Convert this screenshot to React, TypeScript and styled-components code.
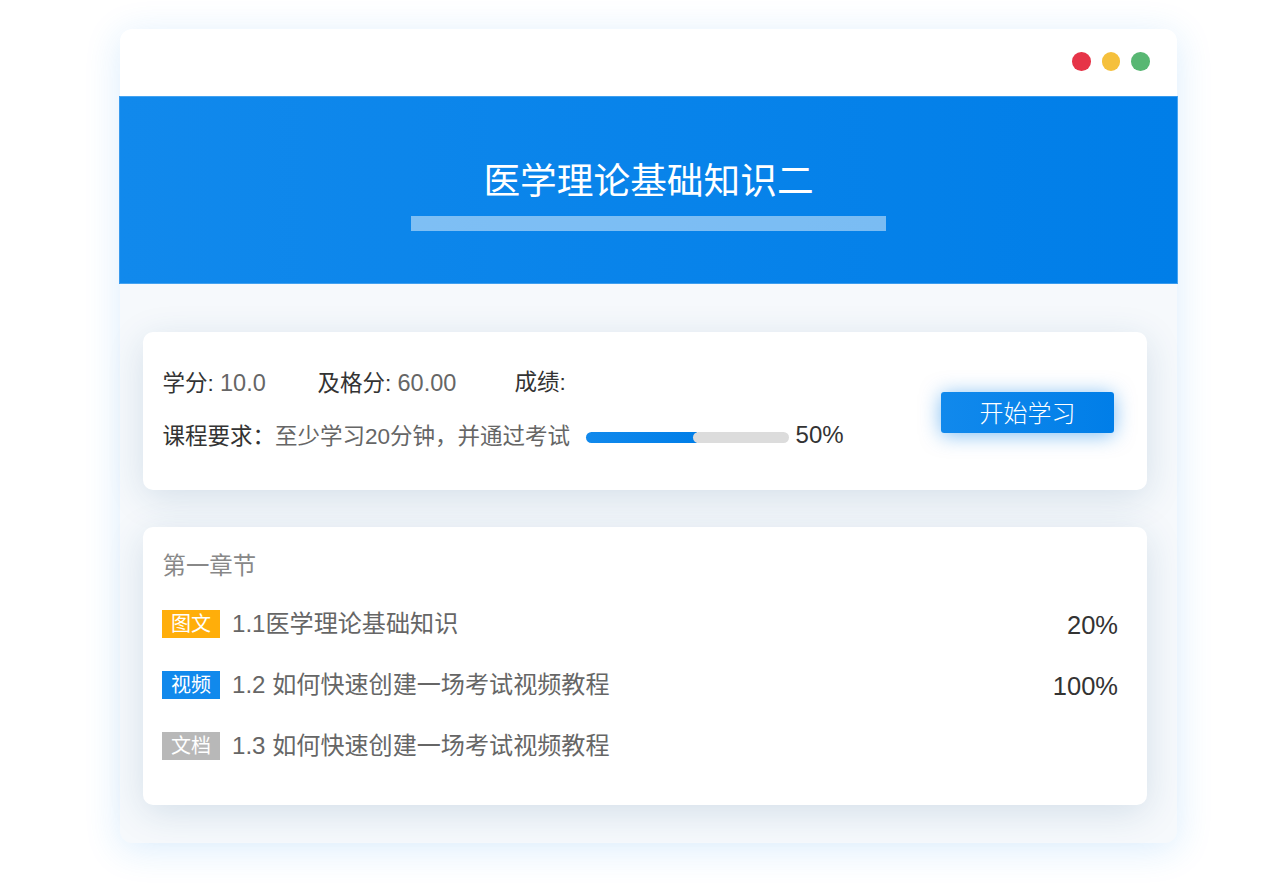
import styled, { createGlobalStyle } from 'styled-components';

const GlobalStyle = createGlobalStyle`
  html, body {
    margin: 0;
    padding: 0;
    background: #fff;
    font-family: "Liberation Sans", "Noto Sans CJK SC", sans-serif;
  }
`;

const lessons = [
  { tag: '图文', kind: 'text', title: '1.1医学理论基础知识', progress: '20%' },
  { tag: '视频', kind: 'video', title: '1.2 如何快速创建一场考试视频教程', progress: '100%' },
  { tag: '文档', kind: 'doc', title: '1.3 如何快速创建一场考试视频教程', progress: '' },
];

const tagColors: Record<string, string> = {
  text: '#ffae0a',
  video: '#1189ec',
  doc: '#b8b8b8',
};

export default function App() {
  return (
    <Page>
      <GlobalStyle />
      <Frame>
        <TitleBar>
          <Dot $color="#e63448" />
          <Dot $color="#f5c03c" />
          <Dot $color="#58b773" />
        </TitleBar>
        <Banner>
          <Title>医学理论基础知识二</Title>
          <TitleLine />
        </Banner>
        <Content>
          <InfoCard>
            <InfoText>
              <InfoRow>
                <Stat $width={155}>学分: <StatValue>10.0</StatValue></Stat>
                <Stat $width={197}>及格分: <StatValue>60.00</StatValue></Stat>
                <Stat>成绩:</Stat>
              </InfoRow>
              <RequireRow>
                <span>课程要求：</span>
                <Muted>至少学习20分钟，并通过考试</Muted>
                <Track>
                  <Fill style={{ width: '111px' }} />
                  <Rest />
                </Track>
                <Percent>50%</Percent>
              </RequireRow>
            </InfoText>
            <StartButton>开始学习</StartButton>
          </InfoCard>
          <ChapterCard>
            <ChapterTitle>第一章节</ChapterTitle>
            {lessons.map(item => (
              <LessonRow key={item.title}>
                <Tag $kind={item.kind}>{item.tag}</Tag>
                <LessonName>{item.title}</LessonName>
                <LessonProgress>{item.progress}</LessonProgress>
              </LessonRow>
            ))}
          </ChapterCard>
        </Content>
      </Frame>
    </Page>
  );
}

const Page = styled.div`
  width: 1280px;
  height: 890px;
  overflow: hidden;
  padding: 29px 0 0 120px;
  box-sizing: border-box;
`;
const Frame = styled.div`
  width: 1057px;
  height: 814px;
  border-radius: 12px;
  background: #f6f9fc;
  box-shadow: 0 6px 36px rgba(30, 140, 240, 0.16);
  display: flex;
  flex-direction: column;
`;
const TitleBar = styled.div`
  height: 67px;
  flex: none;
  box-sizing: border-box;
  padding: 0 27px 2px 0;
  display: flex;
  align-items: center;
  justify-content: flex-end;
  gap: 11px;
  background: #fff;
  border-radius: 12px 12px 0 0;
`;
const Dot = styled.span<{ $color: string }>`
  width: 18.6px;
  height: 18.6px;
  border-radius: 50%;
  background: ${p => p.$color};
`;
const Banner = styled.div`
  height: 188px;
  flex: none;
  margin: 0 -1px;
  box-sizing: border-box;
  padding-top: 61px;
  display: flex;
  flex-direction: column;
  align-items: center;
  background: linear-gradient(90deg, #1189ec, #007ee8);
  border: 1px solid rgba(255, 255, 255, 0.22);
`;
const Title = styled.h1`
  margin: 0;
  font-size: 36.7px;
  line-height: 48px;
  font-weight: 400;
  color: #fff;
`;
const TitleLine = styled.div`
  width: 475px;
  height: 15px;
  margin-top: 10px;
  background: rgba(255, 255, 255, 0.47);
`;
const Content = styled.div`
  padding: 48px 30px 38px 23px;
  display: flex;
  flex-direction: column;
  gap: 37px;
`;
const Card = styled.section`
  background: #fff;
  border-radius: 10px;
  box-shadow: 0 8px 36px rgba(30, 80, 130, 0.15);
`;
const InfoCard = styled(Card)`
  height: 158px;
  box-sizing: border-box;
  padding: 0 33px 0 19.5px;
  display: flex;
  align-items: center;
  justify-content: space-between;
`;
const InfoText = styled.div`
  display: flex;
  flex-direction: column;
  gap: 23px;
  margin-top: -3px;
  font-size: 22.5px;
  line-height: 30px;
  color: #333;
`;
const InfoRow = styled.div`
  display: flex;
`;
const Stat = styled.div<{ $width?: number }>`
  width: ${p => (p.$width ? `${p.$width}px` : 'auto')};
`;
const Muted = styled.span`
  color: #666;
`;
const StatValue = styled(Muted)`
  font-size: 23.5px;
`;
const RequireRow = styled.div`
  display: flex;
  align-items: center;
`;
const Track = styled.div`
  width: 203px;
  height: 11px;
  margin: 2px 7px 0 15.5px;
  display: flex;
`;
const Fill = styled.div`
  height: 100%;
  flex: none;
  border-radius: 6px 0 0 6px;
  background: linear-gradient(90deg, #1189ec, #007ee8);
`;
const Rest = styled.div`
  flex: 1;
  height: 100%;
  margin-left: -4px;
  border-radius: 6px;
  background: #dcdcdc;
`;
const Percent = styled.span`
  margin-top: -3px;
  font-size: 24px;
  color: #333;
`;
const StartButton = styled.button`
  width: 173px;
  height: 41px;
  margin-top: 3px;
  padding: 0 0 3px;
  border: none;
  border-radius: 3px;
  font-family: inherit;
  font-size: 24px;
  font-weight: 300;
  color: #fff;
  background: linear-gradient(90deg, #1189ec, #007ee8);
  box-shadow: 0 2px 20px rgba(0, 126, 232, 0.5);
`;
const ChapterCard = styled(Card)`
  height: 278px;
  box-sizing: border-box;
  padding: 23px 29px 0 19px;
`;
const ChapterTitle = styled.div`
  margin-left: 0.5px;
  font-size: 23.4px;
  line-height: 32px;
  color: #888;
  margin-bottom: 17px;
`;
const LessonRow = styled.div`
  height: 61px;
  display: flex;
  align-items: flex-start;
  padding-top: 8px;
  box-sizing: border-box;
`;
const Tag = styled.span<{ $kind: string }>`
  width: 58px;
  height: 28px;
  margin-top: 3px;
  padding-bottom: 3px;
  box-sizing: border-box;
  flex: none;
  display: flex;
  align-items: center;
  justify-content: center;
  font-size: 20px;
  color: #fff;
  background: ${p => tagColors[p.$kind]};
`;
const LessonName = styled.span`
  margin-left: 12px;
  font-size: 24.1px;
  line-height: 34px;
  color: #666;
  flex: 1;
`;
const LessonProgress = styled.span`
  font-size: 25.5px;
  line-height: 36px;
  color: #333;
`;
